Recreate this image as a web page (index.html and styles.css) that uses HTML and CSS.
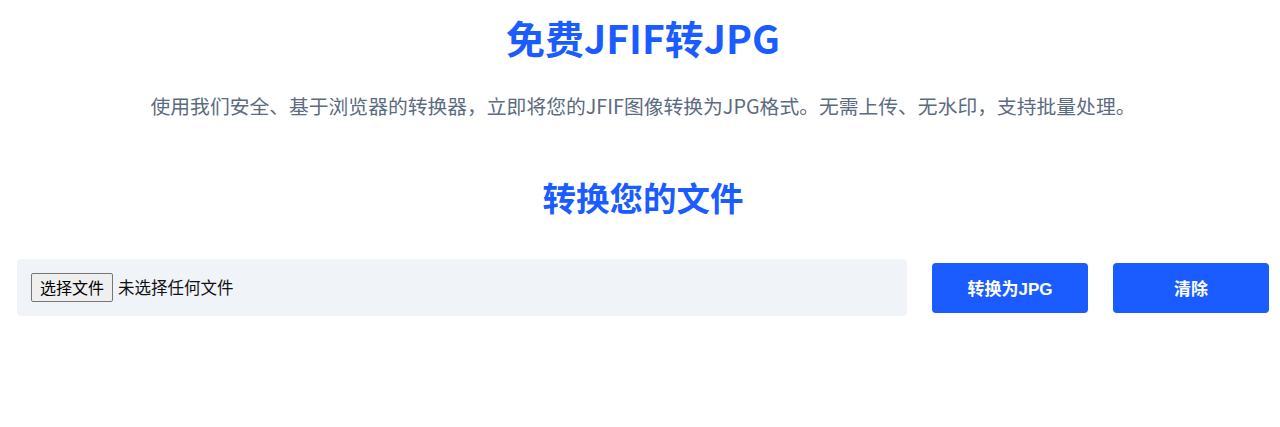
FILE: index.html
```html
<!DOCTYPE html>
<html lang="zh-CN">
<head>
<meta charset="utf-8">
<title>免费JFIF转JPG</title>
<link rel="stylesheet" href="styles.css">
</head>
<body>
<main class="page">
  <header class="hero">
    <h1 class="title">免费JFIF转JPG</h1>
    <p class="subtitle">使用我们安全、基于浏览器的转换器，立即将您的JFIF图像转换为JPG格式。无需上传、无水印，支持批量处理。</p>
  </header>
  <section class="converter">
    <h2 class="section-title">转换您的文件</h2>
    <div class="controls">
      <div class="file-box">
        <label class="file-label">
          <input class="file-input" type="file" accept=".jfif,image/jpeg" multiple>
          <span class="file-btn">选择文件</span>
          <span class="file-status">未选择任何文件</span>
        </label>
      </div>
      <button class="btn" type="button">转换为JPG</button>
      <button class="btn" type="button">清除</button>
    </div>
  </section>
</main>
</body>
</html>
```
FILE: styles.css
```css
html, body {
  margin: 0;
  padding: 0;
  background: #ffffff;
}
body {
  font-family: "Noto Sans CJK SC", "Noto Sans", sans-serif;
  color: #1f2937;
}
.page {
  padding: 0 11px 0 17px;
}
.hero {
  text-align: center;
  padding-top: 9px;
}
.title {
  margin: 0;
  font-size: 39px;
  line-height: 56px;
  font-weight: 700;
  color: #1a5cff;
}
.subtitle {
  margin: 27px 0 0;
  font-size: 19.8px;
  line-height: 28px;
  color: #5b6b80;
}
.converter {
  margin-top: 55px;
}
.section-title {
  margin: 0;
  text-align: center;
  font-size: 33.5px;
  line-height: 44px;
  font-weight: 700;
  color: #1a5cff;
}
.controls {
  display: flex;
  align-items: center;
  gap: 25px;
  margin-top: 40px;
}
.file-box {
  flex: 1;
  background: #f0f3f8;
  border-radius: 4px;
  padding: 14px;
  height: 29px;
  display: flex;
  align-items: center;
}
.file-label {
  display: flex;
  align-items: center;
  gap: 5px;
  cursor: pointer;
}
.file-input {
  display: none;
}
.file-btn {
  display: inline-block;
  padding: 1px 8px;
  font-size: 16px;
  line-height: 25px;
  color: #000;
  background: #efefef;
  border: 1px solid #767676;
  border-radius: 2px;
}
.file-status {
  font-size: 16.5px;
  line-height: 25px;
  color: #111;
}
.btn {
  width: 156px;
  height: 50px;
  border: 0;
  border-radius: 4px;
  background: #1a5cff;
  color: #ffffff;
  font-family: "Liberation Sans", "Noto Sans CJK SC", sans-serif;
  font-size: 17px;
  font-weight: 600;
  cursor: pointer;
}
```
